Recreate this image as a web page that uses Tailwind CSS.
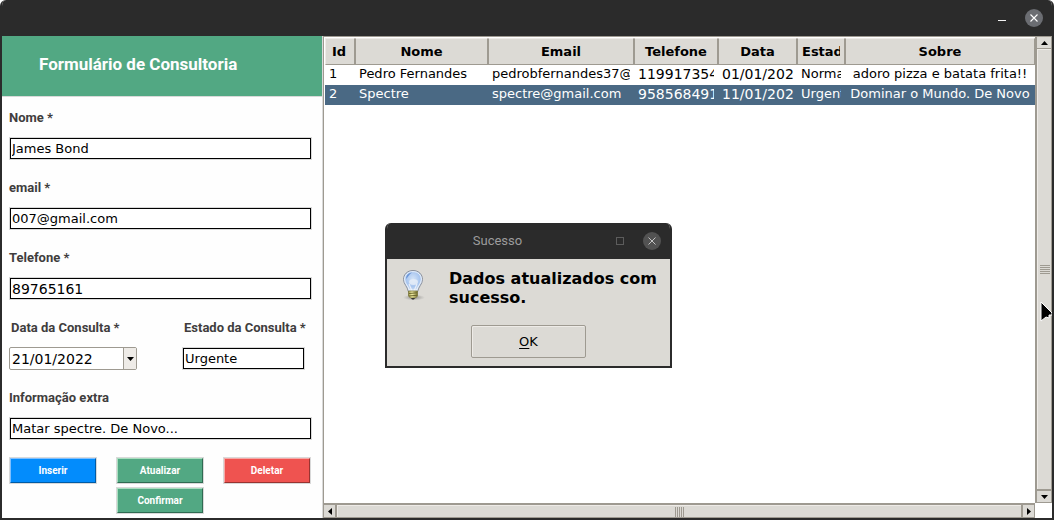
<!DOCTYPE html>
<html lang="pt-BR">
<head>
<meta charset="utf-8">
<meta name="viewport" content="width=device-width, initial-scale=1">
<title>Formulário de Consultoria</title>
<script src="https://cdn.jsdelivr.net/npm/@tailwindcss/browser@4"></script>
</head>
<body class="bg-white">
<div class="relative flex h-screen flex-col overflow-hidden rounded-t-md border-x-2 border-b-2 border-[#2b2b2b] bg-[#fefefe] font-['DejaVu_Sans',sans-serif] text-[13px] text-black">
  <header class="flex h-9 shrink-0 items-center justify-end gap-[15px] bg-[#2b2b2b] pr-[9px]">
    <button type="button" aria-label="Minimizar" class="flex h-[18px] w-4 items-center justify-center">
      <svg width="16" height="18" viewBox="0 0 16 18" class="shrink-0"><path d="M4 11.500h8" stroke="#f4f4f4"/></svg>
    </button>
    <button type="button" aria-label="Fechar" class="flex size-[18px] items-center justify-center rounded-full bg-[#6b6d72]">
      <svg width="8" height="8" viewBox="0 0 8 8"><path d="M.5.5l7 7M7.500.5l-7 7" stroke="#fff" stroke-width="1.100"/></svg>
    </button>
  </header>

  <div class="flex min-h-0 flex-1">
    <section class="flex w-80 shrink-0 flex-col">
      <div class="flex h-[61px] items-center border-b border-[#d9d9d9] bg-[#52a883] pb-[3px] pl-[37px]">
        <h1 class="font-[Roboto,sans-serif] text-[17px] font-bold text-[#fefefe]">Formulário de Consultoria</h1>
      </div>
      <form class="flex flex-col pr-[11px] pl-2 pt-[11px] font-[Roboto,sans-serif] text-[13px] font-bold text-[#403d3d]">
        <div class="flex h-[70px] flex-col gap-[10px]">
          <label for="nome" class="h-5 -ml-px leading-5">Nome *</label>
          <input id="nome" type="text" value="James Bond" class="h-[21px] border border-black bg-white px-px font-['DejaVu_Sans',sans-serif] font-normal text-black ring-1 ring-[#d9d9d9]">
        </div>
        <div class="flex h-[70px] flex-col gap-[10px]">
          <label for="email" class="h-5 -ml-px leading-5">email *</label>
          <input id="email" type="text" value="007@gmail.com" class="h-[21px] border border-black bg-white px-px font-['DejaVu_Sans',sans-serif] font-normal text-black ring-1 ring-[#d9d9d9]">
        </div>
        <div class="flex h-[70px] flex-col gap-[10px]">
          <label for="telefone" class="h-5 -ml-px leading-5">Telefone *</label>
          <input id="telefone" type="text" value="89765161" class="h-[21px] border border-black bg-white px-px font-['DejaVu_Sans',sans-serif] text-sm font-normal text-black ring-1 ring-[#d9d9d9]">
        </div>
        <div class="flex h-[70px] justify-between">
          <div class="-ml-px flex w-32 flex-col gap-[9px]">
            <label for="data" class="h-5 pl-0.5 leading-5">Data da Consulta *</label>
            <div class="relative h-[23px]">
              <select id="data" class="h-full w-full appearance-none rounded-xs border border-[#9e9a91] bg-white pl-0.5 font-['DejaVu_Sans',sans-serif] text-sm font-normal text-black">
                <option>21/01/2022</option>
              </select>
              <span class="pointer-events-none absolute inset-y-px right-px flex w-[13px] items-center justify-center border-l border-[#9e9a91] bg-[#eeebe7]">
                <svg width="7" height="4" viewBox="0 0 7 4"><path d="M0 0h7L3.500 4z"/></svg>
              </span>
            </div>
          </div>
          <div class="flex w-32 flex-col gap-[10px]">
            <label for="estado" class="h-5 whitespace-nowrap pl-px leading-5">Estado da Consulta *</label>
            <input id="estado" type="text" value="Urgente" class="h-[21px] w-[121px] border border-black bg-white px-px font-['DejaVu_Sans',sans-serif] font-normal text-black ring-1 ring-[#d9d9d9]">
          </div>
        </div>
        <div class="flex h-[70px] flex-col gap-[10px]">
          <label for="info" class="h-5 -ml-px leading-5">Informação extra</label>
          <input id="info" type="text" value="Matar spectre. De Novo..." class="h-[21px] border border-black bg-white px-px font-['DejaVu_Sans',sans-serif] font-normal text-black ring-1 ring-[#d9d9d9]">
        </div>
        <div class="grid grid-cols-[86px_86px_86px] justify-between gap-y-[5px] pr-px text-[10px] text-white">
          <button type="button" class="h-[25px] border border-t-[#80c0ff] border-r-[#005ba5] border-b-[#005ba5] border-l-[#80c0ff] bg-[#038cfc] ring-1 ring-[#d9d9d9]">Inserir</button>
          <button type="button" class="h-[25px] border border-t-[#a9dfbf] border-r-[#2f6b52] border-b-[#2f6b52] border-l-[#a9dfbf] bg-[#52a883] ring-1 ring-[#d9d9d9]">Atualizar</button>
          <button type="button" class="h-[25px] border border-t-[#f7a9a7] border-r-[#983431] border-b-[#983431] border-l-[#f7a9a7] bg-[#ef5350] ring-1 ring-[#d9d9d9]">Deletar</button>
          <button type="button" class="col-start-2 h-[25px] border border-t-[#a9dfbf] border-r-[#2f6b52] border-b-[#2f6b52] border-l-[#a9dfbf] bg-[#52a883] ring-1 ring-[#d9d9d9]">Confirmar</button>
        </div>
      </form>
    </section>

    <section class="grid min-w-0 flex-1 grid-cols-[1fr_17px] grid-rows-[1fr_15px] border-l border-[#d9d9d9]">
      <div class="min-h-0 overflow-hidden border-t border-l border-[#9e9a91] bg-white pt-px pl-px">
        <table class="w-full table-fixed border-separate border-spacing-0 text-left">
          <colgroup>
            <col class="w-[30px]"><col class="w-[133px]"><col class="w-[146px]"><col class="w-[84px]"><col class="w-[79px]"><col class="w-[48px]"><col>
          </colgroup>
          <thead>
            <tr class="h-[27px] bg-[#dcdad5] text-center">
              <th class="border border-t-[#eeebe7] border-r-[#9e9a91] border-b-[#9e9a91] border-l-[#eeebe7] pr-1 pl-0.5"><div class="overflow-hidden whitespace-nowrap">Id</div></th>
              <th class="border border-t-[#eeebe7] border-r-[#9e9a91] border-b-[#9e9a91] border-l-[#9e9a91] px-0.5"><div class="overflow-hidden whitespace-nowrap">Nome</div></th>
              <th class="border border-t-[#eeebe7] border-r-[#9e9a91] border-b-[#9e9a91] border-l-[#9e9a91] px-0.5"><div class="overflow-hidden whitespace-nowrap">Email</div></th>
              <th class="border border-t-[#eeebe7] border-r-[#9e9a91] border-b-[#9e9a91] border-l-[#9e9a91] px-0.5"><div class="overflow-hidden whitespace-nowrap">Telefone</div></th>
              <th class="border border-t-[#eeebe7] border-r-[#9e9a91] border-b-[#9e9a91] border-l-[#9e9a91] px-0.5"><div class="overflow-hidden whitespace-nowrap">Data</div></th>
              <th class="border border-t-[#eeebe7] border-r-[#9e9a91] border-b-[#9e9a91] border-l-[#9e9a91] px-1 text-left"><div class="overflow-hidden whitespace-nowrap">Estado</div></th>
              <th class="border border-t-[#eeebe7] border-r-[#9e9a91] border-b-[#9e9a91] border-l-[#9e9a91] px-0.5"><div class="overflow-hidden whitespace-nowrap">Sobre</div></th>
            </tr>
          </thead>
          <tbody>
            <tr class="h-5 align-top leading-[18px]">
              <td class="px-1"><div class="overflow-hidden whitespace-nowrap">1</div></td>
              <td class="px-1"><div class="overflow-hidden whitespace-nowrap">Pedro Fernandes</div></td>
              <td class="px-1"><div class="overflow-hidden whitespace-nowrap">pedrobfernandes37@gmail.com</div></td>
              <td class="px-1 text-[14px]"><div class="overflow-hidden whitespace-nowrap">11991735400</div></td>
              <td class="pr-0.5 pl-1 text-[14px]"><div class="overflow-hidden whitespace-nowrap">01/01/202</div></td>
              <td class="px-1"><div class="overflow-hidden whitespace-nowrap">Normal</div></td>
              <td class="px-1 text-center"><div class="overflow-hidden whitespace-nowrap">adoro pizza e batata frita!!</div></td>
            </tr>
            <tr class="h-5 bg-[#4a6984] align-top leading-[18px] text-white">
              <td class="px-1"><div class="overflow-hidden whitespace-nowrap">2</div></td>
              <td class="px-1"><div class="overflow-hidden whitespace-nowrap">Spectre</div></td>
              <td class="px-1"><div class="overflow-hidden whitespace-nowrap">spectre@gmail.com</div></td>
              <td class="px-1 text-[14px]"><div class="overflow-hidden whitespace-nowrap">95856849100</div></td>
              <td class="pr-0.5 pl-1 text-[14px]"><div class="overflow-hidden whitespace-nowrap">11/01/202</div></td>
              <td class="px-1"><div class="overflow-hidden whitespace-nowrap">Urgente</div></td>
              <td class="px-1 text-center"><div class="overflow-hidden whitespace-nowrap">Dominar o Mundo. De Novo</div></td>
            </tr>
          </tbody>
        </table>
      </div>

      <div class="flex min-h-0 flex-col border border-l-2 border-[#9e9a91] bg-[#dcdad5]">
        <button type="button" aria-label="Rolar para cima" class="flex h-3 shrink-0 items-center justify-center border-b border-[#9e9a91]">
          <svg width="7" height="4" viewBox="0 0 7 4"><path d="M0 4h7L3.500 0z"/></svg>
        </button>
        <div class="flex flex-1 flex-col items-center justify-center gap-px border-t border-l border-[#eeebe7]">
          <i class="h-px w-[10px] bg-[#9e9a91]"></i><i class="h-px w-[10px] bg-[#9e9a91]"></i><i class="h-px w-[10px] bg-[#9e9a91]"></i><i class="h-px w-[10px] bg-[#9e9a91]"></i><i class="h-px w-[10px] bg-[#9e9a91]"></i>
        </div>
        <button type="button" aria-label="Rolar para baixo" class="flex h-[13px] shrink-0 items-center justify-center border-t-2 border-[#9e9a91]">
          <svg width="7" height="4" viewBox="0 0 7 4"><path d="M0 0h7L3.500 4z"/></svg>
        </button>
      </div>

      <div class="flex min-w-0 border border-t-2 border-[#9e9a91] bg-[#dcdad5]">
        <button type="button" aria-label="Rolar para a esquerda" class="flex w-[13px] shrink-0 items-center justify-center border-r-2 border-[#9e9a91]">
          <svg width="4" height="7" viewBox="0 0 4 7"><path d="M4 0v7L0 3.500z"/></svg>
        </button>
        <div class="flex flex-1 items-center justify-center gap-px border-t border-l border-[#eeebe7]">
          <i class="h-[10px] w-px bg-[#9e9a91]"></i><i class="h-[10px] w-px bg-[#9e9a91]"></i><i class="h-[10px] w-px bg-[#9e9a91]"></i><i class="h-[10px] w-px bg-[#9e9a91]"></i><i class="h-[10px] w-px bg-[#9e9a91]"></i>
        </div>
        <button type="button" aria-label="Rolar para a direita" class="flex w-[13px] shrink-0 items-center justify-center border-l-2 border-[#9e9a91]">
          <svg width="4" height="7" viewBox="0 0 4 7"><path d="M0 0v7L4 3.500z"/></svg>
        </button>
      </div>
      <div class="bg-white"></div>
    </section>
  </div>

  <!-- Janela de confirmação -->
  <div role="dialog" aria-labelledby="dlg-title" class="absolute top-[223px] left-[383px] flex w-[287px] flex-col overflow-hidden rounded-t-md border-x-2 border-b-2 border-[#2b2b2b] bg-[#dcdad5]">
    <div class="flex h-9 items-center bg-[#2b2b2b] pr-[9px] font-[Roboto,sans-serif]">
      <h2 id="dlg-title" class="flex-1 pr-2 text-center text-[13px] text-[#9c9c9c]">Sucesso</h2>
      <button type="button" aria-label="Maximizar" class="mr-[19px] size-2 border border-[#5c5c5c]"></button>
      <button type="button" aria-label="Fechar" class="flex size-[18px] items-center justify-center rounded-full bg-[#525252]">
        <svg width="8" height="8" viewBox="0 0 8 8"><path d="M.5.5l7 7M7.500.5l-7 7" stroke="#c4c4c4"/></svg>
      </button>
    </div>
    <div class="flex h-[107px] flex-col items-center justify-between pt-[10px] pr-2 pb-2 pl-[14px]">
      <div class="flex w-full gap-6">
        <svg width="24" height="32" viewBox="0 0 24 32" class="shrink-0">
          <defs>
            <radialGradient id="glass" cx=".5" cy=".4" r=".6"><stop offset="0" stop-color="#d3e3f8"/><stop offset=".6" stop-color="#a9c6ef"/><stop offset="1" stop-color="#d6e2f2"/></radialGradient>
            <linearGradient id="cap" x1="0" x2="1"><stop offset="0" stop-color="#a09a4a"/><stop offset=".4" stop-color="#f4f0a8"/><stop offset="1" stop-color="#77712c"/></linearGradient>
            <radialGradient id="shade"><stop offset="0" stop-color="#555" stop-opacity=".6"/><stop offset="1" stop-color="#777" stop-opacity="0"/></radialGradient>
          </defs>
          <ellipse cx="13" cy="28.500" rx="11" ry="3" fill="url(#shade)"/>
          <path d="M12 1.500C6.300 1.500 2.500 5.500 2.500 10.500c0 4.500 4 7 4.800 12h9.400c.8-5 4.800-7.500 4.800-12 0-5-3.800-9-9.500-9z" fill="url(#glass)" stroke="#8c919c"/>
          <path d="M12 2.600C7 2.600 3.600 6.100 3.600 10.500c0 4 3.800 6.500 4.700 10.500h7.400c.9-4 4.700-6.500 4.700-10.500 0-4.400-3.400-7.900-8.400-7.900z" fill="none" stroke="#fff" stroke-opacity=".7"/>
          <path d="M5 10c0-3 2-6 6-6.500C8 5.500 7 8 5 10z" fill="#6a94d4"/>
          <path d="M8 15l3 7m5-7l-3 7" fill="none" stroke="#f6f8fb" stroke-width="1.200" stroke-opacity=".8"/>
          <ellipse cx="12.500" cy="13" rx="4.500" ry="3" fill="#e9eff8" fill-opacity=".8"/>
          <path d="M7.500 22h9v5l-2 2h-5l-2-2z" fill="url(#cap)" stroke="#77733c" stroke-width=".8"/>
          <path d="M8 24.500l8-.7M8 27l8-.7" stroke="#6c682e"/>
          <path d="M10 29h4l-1 1.500h-2z" fill="#333"/>
        </svg>
        <p class="text-base leading-[19px] font-bold">Dados atualizados com sucesso.</p>
      </div>
      <button type="button" class="mr-1.5 h-[33px] w-[115px] rounded-xs border border-[#9e9a91] shadow-[inset_1px_1px_0_#eeebe7]"><span class="underline underline-offset-2">O</span>K</button>
    </div>
  </div>

  <svg width="12" height="22" viewBox="0 0 12 22" class="absolute top-[301px] right-0"><path d="M1 1l11 11v2H9v3l-3-1-5 4z" fill="#000" stroke="#fff"/></svg>
</div>
</body>
</html>
